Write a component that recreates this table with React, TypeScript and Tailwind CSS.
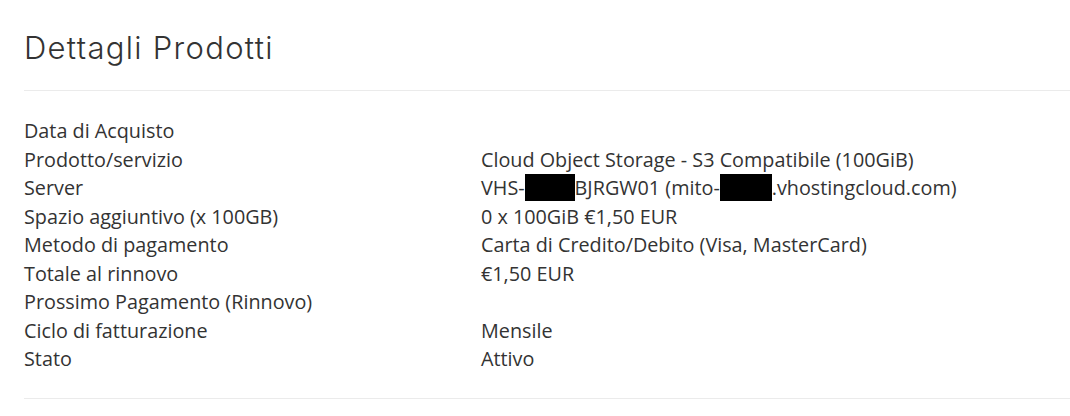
const rows: { label: string; value: React.ReactNode }[] = [
  { label: "Data di Acquisto", value: "" },
  { label: "Prodotto/servizio", value: "Cloud Object Storage - S3 Compatibile (100GiB)" },
  {
    label: "Server",
    value: (
      <>
        VHS-<span className="inline-block h-[27px] w-[50px] bg-black align-[-6px]" />BJRGW01 (mito-
        <span className="inline-block h-[27px] w-[52px] bg-black align-[-6px]" />.vhostingcloud.com)
      </>
    ),
  },
  { label: "Spazio aggiuntivo (x 100GB)", value: "0 x 100GiB €1,50 EUR" },
  { label: "Metodo di pagamento", value: "Carta di Credito/Debito (Visa, MasterCard)" },
  { label: "Totale al rinnovo", value: "€1,50 EUR" },
  { label: "Prossimo Pagamento (Rinnovo)", value: "" },
  { label: "Ciclo di fatturazione", value: "Mensile" },
  { label: "Stato", value: "Attivo" },
];

export default function App() {
  return (
    <main className="h-[416px] w-[1070px] bg-white pl-6 text-[#333] font-['Open_Sans',sans-serif]">
      <h1 className="pt-[28px] pb-[22px] text-[31px] leading-[40px] font-light tracking-[1.3px] text-[#333] font-['Inter',sans-serif]">
        Dettagli Prodotti
      </h1>
      <div className="border-t border-[#ebebeb]" />
      <div className="pt-[26px] pb-[24px]">
        {rows.map((row) => (
          <div key={row.label} className="grid grid-cols-[457px_1fr] text-[19.8px] leading-[28.5px]">
            <div>{row.label}</div>
            <div className="whitespace-nowrap">{row.value}</div>
          </div>
        ))}
      </div>
      <div className="border-t border-[#ebebeb]" />
    </main>
  );
}
